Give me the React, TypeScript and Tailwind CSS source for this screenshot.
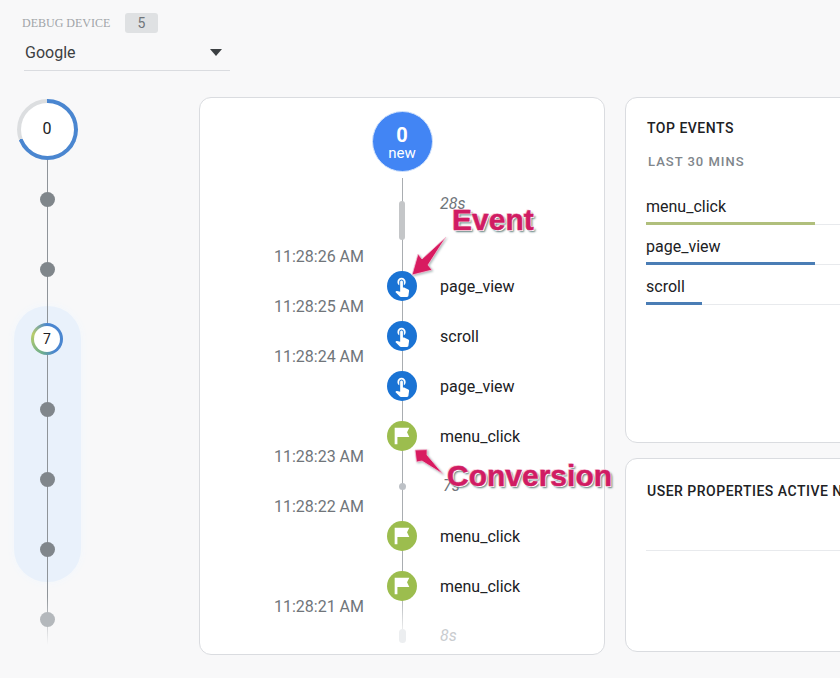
const HandIcon = () => (
    <svg viewBox="0 0 24 24" className="h-[22px] w-[22px] fill-white">
        <path d="M9 11.24V7.5C9 6.12 10.12 5 11.5 5S14 6.12 14 7.5v3.74c1.21-.81 2-2.18 2-3.74C16 5.01 13.99 3 11.5 3S7 5.01 7 7.5c0 1.56.79 2.93 2 3.74zm9.84 4.63l-4.54-2.26c-.17-.07-.35-.11-.54-.11H13v-6c0-.83-.67-1.5-1.5-1.5S10 6.67 10 7.5v10.74l-3.43-.72c-.08-.01-.15-.03-.24-.03-.31 0-.59.13-.79.33l-.79.8 4.94 4.94c.27.27.65.44 1.06.44h6.79c.75 0 1.33-.55 1.44-1.28l.75-5.27c.01-.07.02-.14.02-.2 0-.62-.38-1.16-.91-1.38z" />
    </svg>
)

const FlagIcon = () => (
    <svg viewBox="0 0 24 24" className="h-[22px] w-[22px] fill-white">
        <path d="M4 3h16l-2.5 5 2.5 5H7v8H4z" />
    </svg>
)

const EventRow = ({ kind, label }: { kind: "event" | "conversion"; label: string }) => (
    <div className="flex h-[50px] items-center">
        <div className="flex w-[76px] justify-center">
            <div
                className={
                    kind === "event"
                        ? "relative flex h-[30px] w-[30px] items-center justify-center rounded-full bg-[#1a73d4]"
                        : "relative flex h-[30px] w-[30px] items-center justify-center rounded-full bg-[#9cbd4e]"
                }
            >
                {kind === "event" ? <HandIcon /> : <FlagIcon />}
            </div>
        </div>
        <span className="pt-[2px] text-base text-[#202124]">{label}</span>
    </div>
)

const TimeLabel = ({ time }: { time?: string }) => (
    <div className="flex h-[50px] items-center justify-end pt-[2px] text-base text-[#70757a]">{time}</div>
)

const StreamDot = ({ faded }: { faded?: boolean }) => (
    <div className="flex h-[70px] items-center">
        <div
            className={
                faded
                    ? "relative h-[15px] w-[15px] rounded-full bg-[#b4b8bc]"
                    : "relative h-[15px] w-[15px] rounded-full bg-[#80868b]"
            }
        ></div>
    </div>
)

const TopEvent = ({ name, barClass }: { name: string; barClass: string }) => (
    <div className="h-10 border-b border-[#e8eaed]">
        <div className="pt-[10px] pb-[3px] text-base leading-6 text-[#202124]">{name}</div>
        <div className={barClass}></div>
    </div>
)

const App = () => {
    return (
        <div className="relative h-[678px] w-[840px] overflow-hidden bg-[#f8f8f9] font-['Roboto',sans-serif]">
            <header className="h-[97px] pt-[13px] pl-[22px]">
                <div className="flex h-5 items-center">
                    <span className="w-[103px] font-['Liberation_Serif',serif] text-xs text-[#a0a4a8]">DEBUG DEVICE</span>
                    <span className="flex h-5 w-[33px] items-center justify-center rounded-[3px] bg-[#dfe1e3] text-sm text-[#70757a]">
                        5
                    </span>
                </div>
                <div className="mt-[5px] ml-[2px] flex h-[33px] w-[206px] items-center justify-between border-b border-[#dadce0] pr-2 pb-[3px] pl-px">
                    <span className="text-base text-[#3c4043]">Google</span>
                    <span className="h-0 w-0 border-x-[6px] border-t-[7px] border-x-transparent border-t-[#3c4043]"></span>
                </div>
            </header>

            <main className="flex items-start">
                {/* session stream */}
                <div className="relative w-[199px] shrink-0">
                    <div className="absolute top-[209px] left-[14px] h-[276px] w-[67px] rounded-[33px] bg-[#e9f1fb] shadow-[0_0_8px_#f1f7fd]"></div>
                    <div className="absolute top-[63px] left-[47px] h-[485px] w-px bg-gradient-to-b from-[#8f9499] from-90% to-transparent"></div>
                    <div className="relative flex w-[94px] flex-col items-center pt-[2px]">
                        <div className="mb-[4px] flex h-[61px] w-[61px] items-center justify-center rounded-full bg-[conic-gradient(#4a86d0_0deg_250deg,#dcdee0_250deg_360deg)]">
                            <div className="flex h-[53px] w-[53px] items-center justify-center rounded-full bg-white pb-px text-base text-[#202124]">
                                0
                            </div>
                        </div>
                        <StreamDot />
                        <StreamDot />
                        <div className="flex h-[70px] items-center">
                            <div className="flex h-8 w-8 items-center justify-center rounded-full bg-[conic-gradient(#4a86d0_0deg_150deg,#6fae8c_200deg,#b9cd6a_290deg,#4a86d0_360deg)]">
                                <div className="flex h-[26px] w-[26px] items-center justify-center rounded-full bg-white text-sm text-[#202124]">
                                    7
                                </div>
                            </div>
                        </div>
                        <StreamDot />
                        <StreamDot />
                        <StreamDot />
                        <StreamDot faded />
                    </div>
                </div>

                {/* seconds stream */}
                <section className="h-[558px] w-[406px] shrink-0 rounded-xl border border-[#dadce0] bg-white">
                    <div className="mx-auto mt-[13px] flex h-[61px] w-[61px] flex-col items-center justify-center rounded-full border border-[#d2e3fc] bg-[#4285f4] pt-[3px] text-white">
                        <span className="text-xl leading-5 font-bold">0</span>
                        <span className="text-[15px] leading-4">new</span>
                    </div>
                    <div className="mt-[6px] flex">
                        <div className="w-[164px] shrink-0 pt-[53px]">
                            <TimeLabel time="11:28:26 AM" />
                            <TimeLabel time="11:28:25 AM" />
                            <TimeLabel time="11:28:24 AM" />
                            <TimeLabel />
                            <TimeLabel time="11:28:23 AM" />
                            <TimeLabel time="11:28:22 AM" />
                            <TimeLabel />
                            <TimeLabel time="11:28:21 AM" />
                        </div>
                        <div className="relative flex-1">
                            <div className="absolute top-0 left-[38px] h-[462px] w-px bg-gradient-to-b from-[#a9adb1] from-90% to-transparent"></div>
                            <div className="flex h-[83px]">
                                <div className="flex w-[76px] justify-center pt-[23px]">
                                    <div className="relative h-[39px] w-[6px] rounded-[3px] bg-[#c4c6c8]"></div>
                                </div>
                                <span className="pt-[16px] text-base leading-5 text-[#70757a] italic">28s</span>
                            </div>
                            <EventRow kind="event" label="page_view" />
                            <EventRow kind="event" label="scroll" />
                            <EventRow kind="event" label="page_view" />
                            <EventRow kind="conversion" label="menu_click" />
                            <div className="flex h-[50px] items-center">
                                <div className="flex w-[76px] justify-center">
                                    <div className="relative h-[7px] w-[7px] rounded-full bg-[#bdc1c6]"></div>
                                </div>
                                <span className="ml-[3px] text-base text-[#70757a] italic">7s</span>
                            </div>
                            <EventRow kind="conversion" label="menu_click" />
                            <EventRow kind="conversion" label="menu_click" />
                            <div className="flex h-[50px] items-center">
                                <div className="flex w-[76px] justify-center">
                                    <div className="relative h-[14px] w-[7px] rounded-full bg-[#eceef0]"></div>
                                </div>
                                <span className="text-base text-[#c9cccf] italic">8s</span>
                            </div>
                        </div>
                    </div>
                </section>

                {/* right cards */}
                <div className="ml-5 flex w-[300px] shrink-0 flex-col gap-[15px]">
                    <section className="h-[346px] rounded-xl border border-[#dadce0] bg-white pt-[20px] pl-[20px]">
                        <h2 className="ml-px text-sm leading-5 font-medium tracking-[0.5px] text-[#202124]">TOP EVENTS</h2>
                        <p className="mt-[14px] ml-[2px] text-[13px] leading-5 font-medium tracking-[1px] text-[#80868b]">LAST 30 MINS</p>
                        <div className="mt-[13px]">
                            <TopEvent name="menu_click" barClass="h-[3px] w-[169px] bg-[#b0bf7c]" />
                            <TopEvent name="page_view" barClass="h-[3px] w-[169px] bg-[#4a7db5]" />
                            <TopEvent name="scroll" barClass="h-[3px] w-[56px] bg-[#4a7db5]" />
                        </div>
                    </section>
                    <section className="h-[194px] rounded-xl border border-[#dadce0] bg-white pt-[22px] pl-[20px]">
                        <h2 className="ml-px text-sm leading-5 font-medium tracking-[0.5px] whitespace-nowrap text-[#202124]">
                            USER PROPERTIES ACTIVE NOW
                        </h2>
                        <div className="mt-[49px] border-b border-[#e8eaed]"></div>
                    </section>
                </div>
            </main>

            {/* annotations pasted on top of the screenshot */}
            <svg className="absolute top-[230px] left-[405px] h-[50px] w-[45px] drop-shadow-[1px_1px_1px_#a8b8b8]" viewBox="0 0 45 50">
                <path d="M41 7 L23 35 L27 40 L7 45 L13 24 L17 29 Z" fill="#d81b60" stroke="#f7c6d9" strokeWidth="0.75" />
            </svg>
            <svg className="absolute top-[444px] left-[408px] h-[36px] w-[42px] drop-shadow-[1px_1px_1px_#a8b8b8]" viewBox="0 0 42 36">
                <path d="M35 30 L14 17 L8.5 18 L7 6 L19 5.6 L19 11 Z" fill="#d81b60" stroke="#f7c6d9" strokeWidth="0.75" />
            </svg>
            <span className="absolute top-[202px] left-[452px] font-['Liberation_Sans',sans-serif] text-[30px] leading-9 font-bold text-[#d01c63] [-webkit-text-stroke:0.5px_#d01c63] [text-shadow:1px_1px_0_#fff,-1px_-1px_0_#fbd5e4,2px_2px_2px_#5f7f7f]">
                Event
            </span>
            <span className="absolute top-[458px] left-[447px] font-['Liberation_Sans',sans-serif] text-[30px] leading-9 font-bold text-[#d01c63] [-webkit-text-stroke:0.5px_#d01c63] [text-shadow:1px_1px_0_#fff,-1px_-1px_0_#fbd5e4,2px_2px_2px_#5f7f7f]">
                Conversion
            </span>
        </div>
    )
}

export default App
